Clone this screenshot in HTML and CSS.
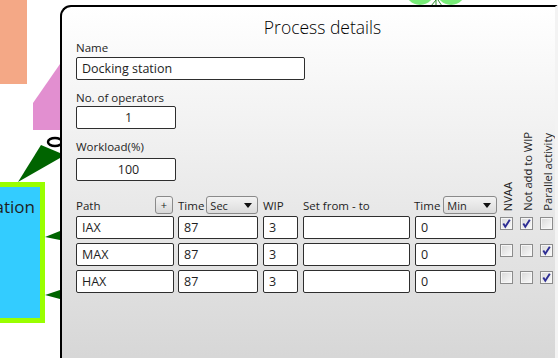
FILE: index.html
```html
<!DOCTYPE html>
<html lang="en">
  <head>
    <meta charset="UTF-8">
    <title>Process details</title>
    <link rel="stylesheet" href="styles.css">
  </head>
  <body>
    <div class="canvas">
      <svg class="diagram" width="558" height="358" viewBox="0 0 558 358">
        <rect x="0" y="0" width="27" height="84" fill="#f4a886"/>
        <polygon points="60,64 33,103 33,130 60,130" fill="#e28fd0"/>
        <circle cx="420" cy="-10" r="15" fill="#77ec77"/>
        <circle cx="451" cy="-10" r="15" fill="#77ec77"/>
        <path d="M436 0 L431 6 M436 0 L436 6 M438 0 L442 6" stroke="#2f8f2f" stroke-width="1"/>
        <rect x="0" y="182" width="45" height="141" fill="#99ff00"/>
        <rect x="0" y="187" width="40" height="131" fill="#33ccff"/>
        <text x="35" y="213" class="node-text" text-anchor="end">ation</text>
        <polygon points="18,182 41,145 60,153 60,158" fill="#006400"/>
        <ellipse cx="55" cy="142" rx="7" ry="4" fill="none" stroke="#000" stroke-width="2.5"/>
        <polygon points="45,237 60,231 60,240" fill="#006400"/>
        <polygon points="45,295 60,290 60,299" fill="#006400"/>
      </svg>

      <div class="dialog">
        <div class="dialog-title">Process details</div>

        <div class="field">
          <div class="field-label">Name</div>
          <input class="box box-name" type="text" value="Docking station">
        </div>
        <div class="field field-ops">
          <div class="field-label">No. of operators</div>
          <input class="box box-small" type="text" value="1">
        </div>
        <div class="field field-load">
          <div class="field-label">Workload(%)</div>
          <input class="box box-small" type="text" value="100">
        </div>

        <div class="path-grid path-head">
          <div class="head-cell head-path">
            <span>Path</span>
            <span class="add-btn">+</span>
          </div>
          <div class="head-cell">
            <span>Time</span>
            <span class="dropdown">Sec<i class="caret"></i></span>
          </div>
          <div class="head-cell">WIP</div>
          <div class="head-cell">Set from - to</div>
          <div class="head-cell head-time">
            <span>Time</span>
            <span class="dropdown dropdown-min">Min<i class="caret"></i></span>
          </div>
          <div class="head-cell head-vert"><span class="vert">NVAA</span></div>
          <div class="head-cell head-vert"><span class="vert">Not add to WIP</span></div>
          <div class="head-cell head-vert"><span class="vert">Parallel activity</span></div>
        </div>

        <div class="path-grid path-rows" id="pathRows">
          <!-- rows from script -->
        </div>
      </div>
    </div>
    <script>
      const paths = [
        { name: 'IAX', time: 87, wip: 3, range: '', time2: 0, flags: [true, true, false] },
        { name: 'MAX', time: 87, wip: 3, range: '', time2: 0, flags: [false, false, true] },
        { name: 'HAX', time: 87, wip: 3, range: '', time2: 0, flags: [false, false, true] }
      ];
      const widths = ['w-path', 'w-time', 'w-wip', 'w-range', 'w-time2'];
      const rows = document.getElementById('pathRows');

      paths.forEach(p => {
        [p.name, p.time, p.wip, p.range, p.time2].forEach((val, i) => {
          const cell = document.createElement('div');
          const input = document.createElement('input');
          input.type = 'text';
          input.className = 'box ' + widths[i];
          input.value = val;
          cell.appendChild(input);
          rows.appendChild(cell);
        });
        p.flags.forEach(on => {
          const cell = document.createElement('div');
          const box = document.createElement('span');
          box.className = 'check';
          if (on) {
            box.innerHTML = '<svg width="11" height="11" viewBox="0 0 11 11"><path d="M2.3 5.6 L4.3 8.8 L8.8 1.8" fill="none" stroke="#2e2e94" stroke-width="1.9"/></svg>';
          }
          cell.appendChild(box);
          rows.appendChild(cell);
        });
      });
    </script>
  </body>
</html>
```

FILE: styles.css
```css
* {
  box-sizing: border-box;
}

body {
  margin: 0;
  background: #ffffff;
  font-family: 'Open Sans', 'Noto Sans', sans-serif;
  color: #1e1e1e;
  overflow: hidden;
}

.canvas {
  position: relative;
  width: 558px;
  height: 358px;
  overflow: hidden;
}

.diagram {
  position: absolute;
  left: 0;
  top: 0;
}

.node-text {
  font-family: 'Open Sans', sans-serif;
  font-size: 17px;
  fill: #1e1e1e;
}

/* the window sits on the diagram canvas */
.dialog {
  position: absolute;
  left: 60px;
  top: 5px;
  width: 498px;
  height: 360px;
  border-top: 2px solid #000;
  border-left: 2px solid #000;
  border-right: 3px solid #f3f3f3;
  border-top-left-radius: 11px;
  background: linear-gradient(#ffffff, #f3f3f3 30%, #d6d6d6 100%);
  padding: 0 0 0 14px;
}

.dialog-title {
  font-size: 17.5px;
  font-weight: 300;
  line-height: 24px;
  padding: 8px 0 1px 14px;
  text-align: center;
  color: #000;
}

.field-label {
  font-size: 11.5px;
  line-height: 16px;
}

.field .box {
  margin-top: 1px;
}

.field-ops,
.field-load {
  margin-top: 10px;
}

.field-ops .box {
  margin-top: 0;
}

.field-load .box {
  margin-top: 3px;
}

.box {
  display: block;
  height: 23px;
  border: 1px solid #2e2e2e;
  border-radius: 2px;
  background: #fff;
  font-family: inherit;
  font-size: 12.5px;
  color: #1e1e1e;
  padding: 0 0 0 5px;
  margin: 0;
  outline: none;
}

.box-name {
  width: 229px;
}

.box-small {
  width: 100px;
  text-align: center;
}

.path-grid {
  display: grid;
  grid-template-columns: 102px 85px 40px 112px 85px 20px 20px 18px;
}

.path-head {
  grid-template-rows: 18px;
  height: 18px;
  margin-top: 15px;
  margin-bottom: 2px;
  font-size: 11.5px;
}

.head-cell {
  display: flex;
  align-items: center;
  gap: 2px;
  height: 18px;
  white-space: nowrap;
}

.head-path {
  justify-content: space-between;
  padding-right: 5px;
}

.head-time {
  margin-left: -1px;
  gap: 3px;
}

.add-btn {
  width: 18px;
  height: 18px;
  border: 1px solid #8a8a8a;
  border-radius: 3px;
  background: linear-gradient(#f4f4f4, #d8d8d8);
  font-size: 11px;
  line-height: 15px;
  text-align: center;
}

.dropdown {
  width: 52px;
  height: 18px;
  display: flex;
  align-items: center;
  justify-content: space-between;
  padding: 0 5px 0 3px;
  border: 1px solid #8a8a8a;
  border-radius: 3px;
  background: linear-gradient(#f3f3f3, #dcdcdc);
  font-size: 11px;
}

.dropdown-min {
  width: 54px;
}

.caret {
  width: 0;
  height: 0;
  border-left: 4px solid transparent;
  border-right: 4px solid transparent;
  border-top: 5px solid #111;
}

.head-vert {
  align-items: flex-end;
}

.vert {
  flex: none;
  writing-mode: vertical-rl;
  transform: rotate(180deg);
  font-size: 11.2px;
  line-height: 16px;
  margin-bottom: 3px;
}

.path-rows {
  grid-auto-rows: 23px;
  row-gap: 4px;
}

.w-path {
  width: 98px;
}

.w-time {
  width: 80px;
}

.w-wip {
  width: 35px;
}

.w-range {
  width: 107px;
}

.w-time2 {
  width: 81px;
}

.check {
  display: flex;
  align-items: center;
  justify-content: center;
  width: 13px;
  height: 13px;
  margin-top: 1px;
  border: 1px solid #8c8c8c;
  box-shadow: inset 0 0 0 1px #f6f6f6;
  background: linear-gradient(135deg, #d8d8d8, #fbfbfb);
}
```
